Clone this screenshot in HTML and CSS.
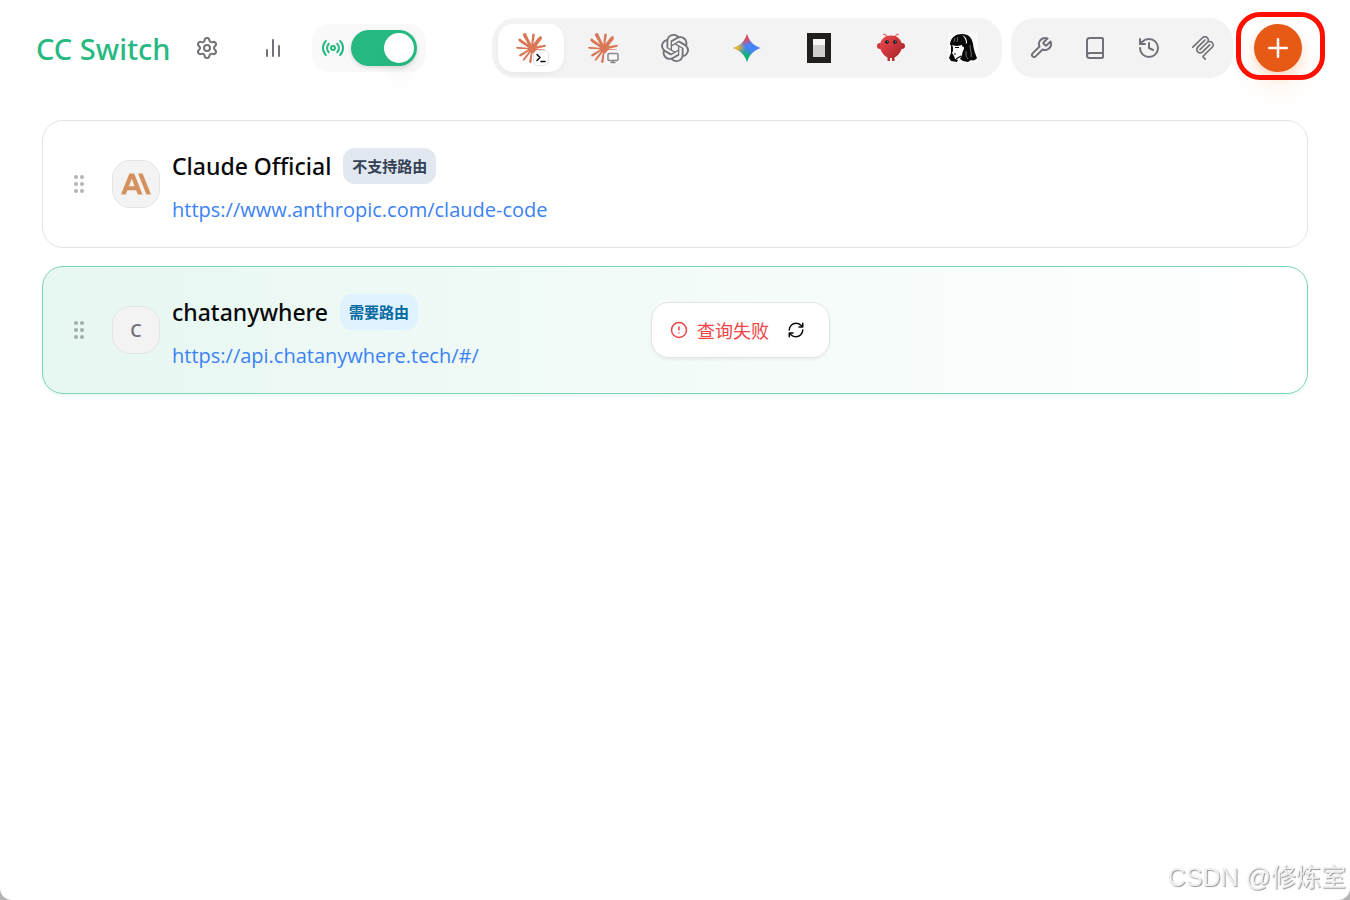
FILE: index.html
```html
<!DOCTYPE html>
<html lang="zh-CN">
<head>
    <meta charset="UTF-8">
    <meta name="viewport" content="width=device-width, initial-scale=1">
    <title>CC Switch</title>
    <link rel="stylesheet" href="styles.css">
</head>
<body>
    <div class="app">
        <header class="header">
            <div class="header-left">
                <h1 class="title">CC Switch</h1>
                <button class="icon-btn" title="设置">
                    <svg class="icon" viewBox="0 0 24 24"><path d="M9.671 4.136a2.34 2.34 0 0 1 4.659 0 2.34 2.34 0 0 0 3.319 1.915 2.34 2.34 0 0 1 2.33 4.033 2.34 2.34 0 0 0 0 3.831 2.34 2.34 0 0 1-2.33 4.033 2.34 2.34 0 0 0-3.319 1.915 2.34 2.34 0 0 1-4.659 0 2.34 2.34 0 0 0-3.32-1.915 2.34 2.34 0 0 1-2.33-4.033 2.34 2.34 0 0 0 0-3.831A2.34 2.34 0 0 1 6.35 6.051a2.34 2.34 0 0 0 3.319-1.915"/><circle cx="12" cy="12" r="3"/></svg>
                </button>
                <button class="icon-btn" title="使用统计">
                    <svg class="icon" viewBox="0 0 24 24"><path d="M18 20V10M12 20V4M6 20v-6"/></svg>
                </button>
                <label class="proxy" title="路由">
                    <svg class="icon" viewBox="0 0 24 24"><path d="M4.9 19.1C1 15.2 1 8.8 4.9 4.9M7.8 16.2c-2.3-2.3-2.3-6.1 0-8.5M16.2 7.8c2.3 2.3 2.3 6.1 0 8.5M19.1 4.9C23 8.8 23 15.1 19.1 19"/><circle cx="12" cy="12" r="2"/></svg>
                    <input class="switch" type="checkbox" checked>
                </label>
            </div>

            <div class="header-right">
                <nav class="group apps">
                    <button class="app-btn active" title="Claude Code">
                        <span class="app-icon">
                            <svg class="claude" viewBox="0 0 24 24"><path id="claude" d="m4.7144 15.9555 4.7174-2.6471.079-.2307-.079-.1275h-.2307l-.7893-.0486-2.6956-.0729-2.3375-.0971-2.2646-.1214-.5707-.1215-.5343-.7042.0546-.3522.4797-.3218.686.0608 1.5179.1032 2.2767.1578 1.6514.0972 2.4468.255h.3886l.0546-.1579-.1336-.0971-.1032-.0972L6.973 9.8356l-2.55-1.6879-1.3356-.9714-.7225-.4918-.3643-.4614-.1578-1.0078.6557-.7225.8803.0607.2246.0607.8925.686 1.9064 1.4754 2.4893 1.8336.3643.3035.1457-.1032.0182-.0728-.164-.2733-1.3539-2.4467-1.445-2.4893-.6435-1.032-.17-.6194c-.0607-.255-.1032-.4674-.1032-.7285L6.287.1335 6.6997 0l.9957.1336.419.3642.6192 1.4147 1.0018 2.2282 1.5543 3.0296.4553.8985.2429.8318.091.255h.1579v-.1457l.1275-1.706.2368-2.0947.2307-2.6957.0789-.7589.3764-.9107.7468-.4918.5828.2793.4797.686-.0668.4433-.2853 1.8517-.5586 2.9021-.3643 1.9429h.2125l.2429-.2429.9835-1.3053 1.6514-2.0643.7286-.8196.85-.9046.5464-.4311h1.0321l.759 1.1293-.34 1.1657-1.0625 1.3478-.8804 1.1414-1.2628 1.7-.7893 1.36.0729.1093.1882-.0183 2.8535-.607 1.5421-.2794 1.8396-.3157.8318.3886.091.3946-.3278.8075-1.967.4857-2.3072.4614-3.4364.8136-.0425.0304.0486.0607 1.5482.1457.6618.0364h1.621l3.0175.2247.7892.522.4736.6376-.079.4857-1.2142.6193-1.6393-.3886-3.825-.9107-1.3113-.3279h-.1822v.1093l1.0929 1.0686 2.0035 1.8092 2.5075 2.3314.1275.5768-.3218.4554-.34-.0486-2.2039-1.6575-.85-.7468-1.9246-1.621h-.1275v.17l.4432.6496 2.3436 3.5214.1214 1.0807-.17.3521-.6071.2125-.6679-.1214-1.3721-1.9246L14.38 17.959l-1.1414-1.9428-.1397.079-.674 7.2552-.3156.3703-.7286.2793-.6071-.4614-.3218-.7468.3218-1.4753.3886-1.9246.3157-1.53.2853-1.9004.17-.6314-.0121-.0425-.1397.0182-1.4328 1.9672-2.1796 2.9446-1.7243 1.8456-.4128.164-.7164-.3704.0667-.6618.4008-.5889 2.386-3.0357 1.4389-1.882.929-1.0868-.0062-.1579h-.0546l-6.3385 4.1164-1.1293.1457-.4857-.4554.0608-.7467.2307-.2429 1.9064-1.3114Z"/></svg>
                            <span class="app-badge terminal">
                                <svg viewBox="0 0 24 24"><path d="m4 17 6-6-6-6M12 19h8"/></svg>
                            </span>
                        </span>
                    </button>
                    <button class="app-btn" title="Claude Desktop">
                        <span class="app-icon">
                            <svg class="claude" viewBox="0 0 24 24"><use href="#claude"/></svg>
                            <span class="app-badge">
                                <svg viewBox="0 0 24 24"><rect x="2" y="3" width="20" height="14" rx="2"/><path d="M8 21h8M12 17v4"/></svg>
                            </span>
                        </span>
                    </button>
                    <button class="app-btn" title="Codex">
                        <svg class="openai" viewBox="0 0 24 24"><path d="M22.2819 9.8211a5.9847 5.9847 0 0 0-.5157-4.9108 6.0462 6.0462 0 0 0-6.5098-2.9A6.0651 6.0651 0 0 0 4.9807 4.1818a5.9847 5.9847 0 0 0-3.9977 2.9 6.0462 6.0462 0 0 0 .7427 7.0966 5.98 5.98 0 0 0 .511 4.9107 6.051 6.051 0 0 0 6.5146 2.9001A5.9847 5.9847 0 0 0 13.2599 24a6.0557 6.0557 0 0 0 5.7718-4.2058 5.9894 5.9894 0 0 0 3.9977-2.9001 6.0557 6.0557 0 0 0-.7475-7.0729zm-9.022 12.6081a4.4755 4.4755 0 0 1-2.8764-1.0408l.1419-.0804 4.7783-2.7582a.7948.7948 0 0 0 .3927-.6813v-6.7369l2.02 1.1686a.071.071 0 0 1 .038.052v5.5826a4.504 4.504 0 0 1-4.4945 4.4944zm-9.6607-4.1254a4.4708 4.4708 0 0 1-.5346-3.0137l.142.0852 4.783 2.7582a.7712.7712 0 0 0 .7806 0l5.8428-3.3685v2.3324a.0804.0804 0 0 1-.0332.0615L9.74 19.9502a4.4992 4.4992 0 0 1-6.1408-1.6464zM2.3408 7.8956a4.485 4.485 0 0 1 2.3655-1.9728V11.6a.7664.7664 0 0 0 .3879.6765l5.8144 3.3543-2.0201 1.1685a.0757.0757 0 0 1-.071 0l-4.8303-2.7865A4.504 4.504 0 0 1 2.3408 7.872zm16.5963 3.8558L13.1038 8.364 15.1192 7.2a.0757.0757 0 0 1 .071 0l4.8303 2.7913a4.4944 4.4944 0 0 1-.6765 8.1042v-5.6772a.79.79 0 0 0-.407-.667zm2.0107-3.0231l-.142-.0852-4.7735-2.7818a.7759.7759 0 0 0-.7854 0L9.409 9.2297V6.8974a.0662.0662 0 0 1 .0284-.0615l4.8303-2.7866a4.4992 4.4992 0 0 1 6.6802 4.66zM8.3065 12.863l-2.02-1.1638a.0804.0804 0 0 1-.038-.0567V6.0742a4.4992 4.4992 0 0 1 7.3757-3.4537l-.142.0805L8.704 5.459a.7948.7948 0 0 0-.3927.6813zm1.0976-2.3654l2.602-1.4998 2.6069 1.4998v2.9994l-2.5974 1.4997-2.6067-1.4997Z"/></svg>
                    </button>
                    <button class="app-btn" title="Gemini">
                        <svg class="logo" viewBox="0 0 30 30">
                            <defs>
                                <radialGradient id="gemRed" gradientUnits="userSpaceOnUse" cx="13" cy="1" r="12"><stop offset=".4" stop-color="#f2434b"/><stop offset="1" stop-color="#f2434b" stop-opacity="0"/></radialGradient>
                                <radialGradient id="gemYellow" gradientUnits="userSpaceOnUse" cx="1" cy="15" r="13"><stop offset=".3" stop-color="#f8bd10"/><stop offset="1" stop-color="#f8bd10" stop-opacity="0"/></radialGradient>
                                <radialGradient id="gemGreen" gradientUnits="userSpaceOnUse" cx="12" cy="28" r="13"><stop offset=".4" stop-color="#0ab960"/><stop offset="1" stop-color="#0ab960" stop-opacity="0"/></radialGradient>
                                <path id="gem" d="M15 1c1.500 6.500 7.500 12.500 14 14-6.500 1.500-12.500 7.500-14 14-1.500-6.500-7.500-12.500-14-14C7.500 13.500 13.500 7.500 15 1z"/>
                            </defs>
                            <use href="#gem" fill="#4484fa"/>
                            <use href="#gem" fill="url(#gemYellow)"/>
                            <use href="#gem" fill="url(#gemGreen)"/>
                            <use href="#gem" fill="url(#gemRed)"/>
                        </svg>
                    </button>
                    <button class="app-btn" title="OpenCode">
                        <svg class="logo" viewBox="0 0 30 30"><path fill="#211e1e" d="M3 0h24v30H3z"/><path fill="#f7f5f6" d="M9 6h12v6H9z"/><path fill="#cfcecd" d="M9 12h12v12H9z"/></svg>
                    </button>
                    <button class="app-btn" title="OpenClaw">
                        <svg class="logo" viewBox="0 0 30 30">
                            <defs><linearGradient id="claw" x1="0" y1="0" x2="1" y2="1"><stop offset="0" stop-color="#ef4a4d"/><stop offset="1" stop-color="#a5222a"/></linearGradient></defs>
                            <path d="M11 3.500Q9.500 1 7.500 1.500M19 3.500Q20.500 1 22.500 1.500" fill="none" stroke="#f0686b" stroke-width="1.200" stroke-linecap="round"/>
                            <circle cx="4" cy="13" r="3" fill="#c9353b"/><circle cx="26" cy="13" r="3" fill="#b52a31"/>
                            <path fill="url(#claw)" d="M15 2.500c7 0 11 5 11 10.500 0 5-4 10-7.500 11.500V28h-2.500v-3h-2v3h-2.500v-3.500C8 23 4 18 4 13 4 7.500 8 2.500 15 2.500z"/>
                            <circle cx="11" cy="9" r="1.800" fill="#071015"/><circle cx="19" cy="9" r="1.800" fill="#071015"/>
                            <circle cx="11.500" cy="8.700" r=".7" fill="#13bfae"/><circle cx="19.500" cy="8.700" r=".7" fill="#13bfae"/>
                        </svg>
                    </button>
                    <button class="app-btn" title="Hermes">
                        <svg class="logo" viewBox="0 0 30 30">
                            <path fill="#fafafa" d="M0 0h30v30H0z"/>
                            <path fill="#080808" d="M2 11C3 4 8 1 14 1c7 0 10 4 11 10 .5 5 2 9 4 14-1 2-4 3-6 2l-3 2-5-1-3-2 2-4 1-6-1-4-5 1-7-1z"/>
                            <path fill="#080808" d="M3 11 5 14 5 18 4 20 6 23 7 26 10 27 9 29 3 28 1 25 3 20z"/>
                            <path fill="#fafafa" d="M14 2c4 2 5 4 5 8l-1 1c0-4-1-6-4-9zM14 14c2-1 3 1 1 4l-1 1z"/>
                            <path fill="none" stroke="#9a9a9a" stroke-width=".7" d="M22 12c0 5 2 8 1 12M18 18c0 4 0 6 2 8M7 5 6 9M10 4 9 9"/>
                            <path fill="none" stroke="#080808" stroke-width="1.200" d="M7 14.500h4M6 21h2M8 26l5-3"/>
                        </svg>
                    </button>
                </nav>

                <div class="group tools">
                    <button class="icon-btn" title="Skills">
                        <svg class="icon" viewBox="0 0 24 24"><path d="M14.7 6.3a1 1 0 0 0 0 1.4l1.600 1.600a1 1 0 0 0 1.400 0l3.770-3.770a6 6 0 0 1-7.940 7.940l-6.910 6.910a2.120 2.120 0 0 1-3-3l6.910-6.910a6 6 0 0 1 7.940-7.940l-3.760 3.760z"/></svg>
                    </button>
                    <button class="icon-btn" title="提示词">
                        <svg class="icon" viewBox="0 0 24 24"><path d="M4 19.500v-15A2.500 2.500 0 0 1 6.500 2H19a1 1 0 0 1 1 1v18a1 1 0 0 1-1 1H6.500a1 1 0 0 1 0-5H20"/></svg>
                    </button>
                    <button class="icon-btn" title="会话历史">
                        <svg class="icon" viewBox="0 0 24 24"><path d="M3 12a9 9 0 1 0 9-9 9.750 9.750 0 0 0-6.740 2.740L3 8"/><path d="M3 3v5h5M12 7v5l4 2"/></svg>
                    </button>
                    <button class="icon-btn" title="MCP">
                        <svg class="mcp" viewBox="0 0 24 24"><path d="M15.688 2.343a2.588 2.588 0 00-3.61 0l-9.626 9.440a.863.863 0 01-1.203 0 .823.823 0 010-1.180l9.626-9.440a4.313 4.313 0 016.016 0 4.116 4.116 0 011.204 3.540 4.300 4.300 0 013.609 1.180l.05.05a4.115 4.115 0 010 5.900l-8.706 8.537a.274.274 0 000 .393l1.788 1.754a.823.823 0 010 1.180.863.863 0 01-1.203 0l-1.788-1.753a1.920 1.920 0 010-2.754l8.706-8.538a2.470 2.470 0 000-3.540l-.05-.049a2.588 2.588 0 00-3.607-.003l-7.172 7.034-.002.002-.098.097a.863.863 0 01-1.204 0 .823.823 0 010-1.180l7.273-7.133a2.470 2.470 0 00-.003-3.537z"/><path d="M14.485 4.703a.823.823 0 000-1.180.863.863 0 00-1.204 0l-7.119 6.982a4.115 4.115 0 000 5.900 4.314 4.314 0 006.016 0l7.120-6.982a.823.823 0 000-1.180.863.863 0 00-1.204 0l-7.119 6.982a2.588 2.588 0 01-3.610 0 2.470 2.470 0 010-3.540l7.120-6.982z"/></svg>
                    </button>
                </div>

                <div class="add">
                    <button class="add-btn" title="添加供应商">
                        <svg viewBox="0 0 24 24"><path d="M5 12h14M12 5v14"/></svg>
                    </button>
                </div>
            </div>
        </header>

        <main class="providers">
            <article class="card">
                <button class="grip" title="拖拽排序">
                    <svg viewBox="0 0 24 24"><circle cx="9" cy="5" r="2"/><circle cx="9" cy="12" r="2"/><circle cx="9" cy="19" r="2"/><circle cx="15" cy="5" r="2"/><circle cx="15" cy="12" r="2"/><circle cx="15" cy="19" r="2"/></svg>
                </button>
                <div class="avatar">
                    <svg class="anthropic" viewBox="0 0 24 24"><path d="M17.3041 3.541h-3.6718l6.696 16.918H24Zm-10.6082 0L0 20.459h3.7442l1.3693-3.5527h7.0052l1.3693 3.5528h3.7442L10.5363 3.5409Zm-.3712 10.2232 2.2914-5.9456 2.2914 5.9456Z"/></svg>
                </div>
                <div class="info">
                    <div class="name-row">
                        <h2 class="name">Claude Official</h2>
                        <span class="tag">不支持路由</span>
                    </div>
                    <a class="url" href="https://www.anthropic.com/claude-code">https://www.anthropic.com/claude-code</a>
                </div>
            </article>

            <article class="card current">
                <button class="grip" title="拖拽排序">
                    <svg viewBox="0 0 24 24"><circle cx="9" cy="5" r="2"/><circle cx="9" cy="12" r="2"/><circle cx="9" cy="19" r="2"/><circle cx="15" cy="5" r="2"/><circle cx="15" cy="12" r="2"/><circle cx="15" cy="19" r="2"/></svg>
                </button>
                <div class="avatar">C</div>
                <div class="info">
                    <div class="name-row">
                        <h2 class="name">chatanywhere</h2>
                        <span class="tag tag-blue">需要路由</span>
                    </div>
                    <a class="url" href="https://api.chatanywhere.tech/#/">https://api.chatanywhere.tech/#/</a>
                </div>
                <div class="usage">
                    <svg class="usage-icon" viewBox="0 0 24 24"><circle cx="12" cy="12" r="10"/><path d="M12 8v4M12 16h.01"/></svg>
                    <span>查询失败</span>
                    <button class="refresh" title="刷新">
                        <svg class="usage-icon" viewBox="0 0 24 24"><path d="M3 12a9 9 0 0 1 9-9 9.750 9.750 0 0 1 6.740 2.740L21 8M21 3v5h-5M21 12a9 9 0 0 1-9 9 9.750 9.750 0 0 1-6.740-2.740L3 16M8 16H3v5"/></svg>
                    </button>
                </div>
            </article>
        </main>
    </div>

    <div class="watermark">CSDN @修炼室</div>
</body>
</html>
```

FILE: styles.css
```css
* {
    box-sizing: border-box;
}

body {
    margin: 0;
    background: #b4b4b4;
    color: #09090b;
    font-family: "Open Sans", "Noto Sans CJK SC", sans-serif;
    font-size: 20px;
}

button {
    padding: 0;
    border: none;
    background: none;
    color: inherit;
    font: inherit;
    cursor: pointer;
}

svg {
    display: block;
}

.app {
    min-height: 100vh;
    background: #fff;
    border-radius: 0 0 12px 12px;
}

/* Header */
.header {
    display: flex;
    align-items: center;
    justify-content: space-between;
    height: 96px;
    padding: 0 48px 0 36px;
}

.header-left,
.header-right {
    display: flex;
    align-items: center;
}

.title {
    margin: 0 12px 0 0;
    padding-top: 2px;
    color: #27b982;
    font-family: "Noto Sans", sans-serif;
    font-size: 29px;
    font-weight: 500;
    line-height: 42px;
    white-space: nowrap;
}

.icon-btn {
    display: flex;
    align-items: center;
    justify-content: center;
    width: 48px;
    height: 48px;
    border-radius: 15px;
    color: #71717a;
}

.header-left .icon-btn {
    margin-right: 18px;
}

.icon {
    width: 24px;
    height: 24px;
    fill: none;
    stroke: currentColor;
    stroke-width: 2;
    stroke-linecap: round;
    stroke-linejoin: round;
}

.proxy {
    display: flex;
    align-items: center;
    gap: 6px;
    height: 48px;
    margin-left: -3px;
    padding: 0 9px;
    border-radius: 18px;
    background: #f9f9f9;
    color: #27b982;
    cursor: pointer;
}

.switch {
    appearance: none;
    width: 66px;
    height: 36px;
    margin: 0;
    padding: 3px;
    border-radius: 18px;
    background: #d4d4d8;
    box-shadow: 0 2px 4px rgba(0, 0, 0, 0.12);
    cursor: pointer;
}

.switch::before {
    content: "";
    display: block;
    width: 30px;
    height: 30px;
    border-radius: 50%;
    background: #fff;
    box-shadow: 0 15px 20px rgba(0, 0, 0, 0.04);
}

.switch:checked {
    background: #27b982;
}

.switch:checked::before {
    margin-left: auto;
}

.group {
    display: flex;
    gap: 6px;
    padding: 6px;
    border-radius: 24px;
    background: #f3f3f3;
}

.tools {
    margin: 0 21px 0 9px;
}

.app-btn {
    display: flex;
    align-items: center;
    justify-content: center;
    width: 66px;
    height: 48px;
    border-radius: 15px;
    color: #71717a;
}

.app-btn.active {
    background: #fff;
    box-shadow: 0 2px 4px rgba(0, 0, 0, 0.05);
}

.app-icon {
    position: relative;
}

.claude {
    width: 30px;
    height: 30px;
    fill: #d97757;
}

.logo {
    width: 30px;
    height: 30px;
}

.openai {
    width: 28px;
    height: 28px;
    fill: currentColor;
}

.app-badge {
    position: absolute;
    right: -3px;
    bottom: -3px;
    padding: 1px;
    border: 1px solid #f5f5f5;
    border-radius: 5px;
    background: #f9f9f9;
}

.app-badge svg {
    width: 12px;
    height: 12px;
    fill: none;
    stroke: #85858c;
    stroke-width: 3;
    stroke-linecap: round;
    stroke-linejoin: round;
    overflow: visible;
}

.app-badge.terminal {
    border-color: #e4e4e7;
    background: #fff;
}

.app-badge.terminal svg {
    stroke: #09090b;
}

.mcp {
    width: 24px;
    height: 24px;
    fill: currentColor;
}

.add {
    position: relative;
}

/* Marker ring around the add button */
.add::after {
    content: "";
    position: absolute;
    inset: -12px -23px -8px -18px;
    border: 5px solid #ff0f00;
    border-radius: 24px;
    pointer-events: none;
}

.add-btn {
    display: flex;
    align-items: center;
    justify-content: center;
    width: 48px;
    height: 48px;
    border-radius: 50%;
    background: #e65a16;
    box-shadow: 0 15px 24px rgba(249, 115, 22, 0.12), 0 4px 8px rgba(249, 115, 22, 0.16);
}

.add-btn svg {
    width: 30px;
    height: 30px;
    fill: none;
    stroke: #fff;
    stroke-width: 2;
    stroke-linecap: round;
}

/* Provider list */
.providers {
    display: flex;
    flex-direction: column;
    gap: 18px;
    padding: 24px 42px;
}

.card {
    display: flex;
    align-items: center;
    min-height: 128px;
    padding: 20px 24px;
    border: 1px solid #e4e4e7;
    border-radius: 21px;
}

.card.current {
    border-color: #7dd5b4;
    background: linear-gradient(to right, #e7f7f1, #fff);
    box-shadow: 0 2px 3px rgba(39, 185, 130, 0.1);
}

.grip {
    margin-right: 21px;
    cursor: grab;
}

.grip svg {
    width: 24px;
    height: 24px;
    fill: #09090b;
    opacity: 0.3;
}

.avatar {
    display: flex;
    align-items: center;
    justify-content: center;
    width: 48px;
    height: 48px;
    margin-right: 12px;
    border: 1px solid #e4e4e7;
    border-radius: 18px;
    background: #f3f3f3;
    color: #71717a;
    font-size: 18px;
    font-weight: 600;
}

.anthropic {
    width: 30px;
    height: 30px;
    fill: #d4915d;
}

.info {
    flex: 1;
    min-width: 0;
    padding-top: 4px;
}

.name-row {
    display: flex;
    align-items: center;
    gap: 12px;
    height: 36px;
    margin-bottom: 12px;
}

.name {
    margin: 0;
    font-family: "Noto Sans", "Noto Sans CJK SC", sans-serif;
    font-size: 23px;
    font-weight: 500;
}

.tag {
    padding: 0 9px;
    border-radius: 12px;
    background: #e2e8f0;
    color: #334155;
    font-size: 15px;
    font-weight: 600;
    line-height: 36px;
}

.tag-blue {
    background: #e0f2fe;
    color: #0369a1;
}

.url {
    display: block;
    color: #3b82f6;
    font-size: 20px;
    line-height: 28px;
    text-decoration: none;
}

.url:hover {
    text-decoration: underline;
}

.usage {
    display: flex;
    align-items: center;
    height: 56px;
    margin-right: 453px;
    padding: 0 18px;
    border: 1px solid #e4e4e7;
    border-radius: 18px;
    background: #fff;
    box-shadow: 0 2px 3px rgba(0, 0, 0, 0.05);
    color: #ef4444;
    font-size: 18px;
}

.usage span {
    margin: 0 12px 0 9px;
}

.usage-icon {
    width: 18px;
    height: 18px;
    fill: none;
    stroke: currentColor;
    stroke-width: 2;
    stroke-linecap: round;
    stroke-linejoin: round;
}

.refresh {
    padding: 6px;
    color: #09090b;
}

.watermark {
    position: fixed;
    right: 4px;
    bottom: 3px;
    color: #f0f0f0;
    font-family: "Liberation Sans", "Noto Sans CJK SC", sans-serif;
    font-size: 25px;
    line-height: 39px;
    text-shadow: 1px 1px 1px #999;
    pointer-events: none;
}
```
